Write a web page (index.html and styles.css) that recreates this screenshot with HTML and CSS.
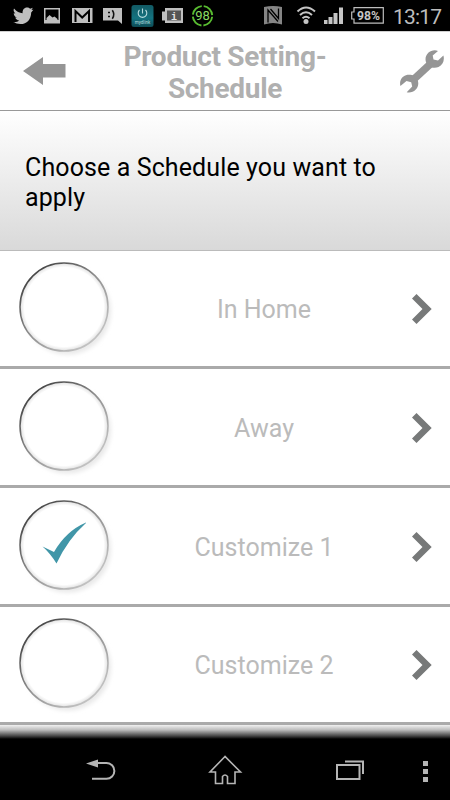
FILE: index.html
```
<!DOCTYPE html>
<html lang="en">
<head>
<meta charset="utf-8">
<title>Product Setting - Schedule</title>
<link rel="stylesheet" href="styles.css">
</head>
<body>
<svg class="defs" width="0" height="0" aria-hidden="true">
  <defs>
    <linearGradient id="rim" x1="0.15" y1="0.1" x2="0.85" y2="0.9">
      <stop offset="0" stop-color="#444"/><stop offset="0.5" stop-color="#929292"/><stop offset="1" stop-color="#c4c4c4"/>
    </linearGradient>
    <linearGradient id="teal" x1="0" y1="0" x2="0" y2="1"><stop offset="0" stop-color="#125a64"/><stop offset="0.6" stop-color="#147380"/><stop offset="1" stop-color="#0d4b55"/></linearGradient>
    <radialGradient id="inner"><stop offset="0.9" stop-color="#fff"/><stop offset="1" stop-color="#e0e0e0"/></radialGradient>
    <filter id="soft" x="-20%" y="-20%" width="140%" height="140%"><feGaussianBlur stdDeviation="2.2"/></filter>
    <symbol id="ring" viewBox="0 0 100 100">
      <circle cx="49.500" cy="50" r="43.500" fill="#e9e9e9" filter="url(#soft)"/>
      <circle cx="46" cy="46" r="44" fill="url(#inner)" stroke="url(#rim)" stroke-width="1.500"/>
    </symbol>
    <symbol id="chevron" viewBox="0 0 20 30"><path d="M0 4.500 4.500 0 19.700 15 4.500 30 0 25.500 10.500 15Z" fill="#777979"/></symbol>
  </defs>
</svg>
<div class="screen">
  <header class="status">
    <svg width="225" height="31" viewBox="0 0 225 31">
      <path d="M14 8.500c2.500 3 5.500 4.500 8.600 4.700-.3-3.300 1.600-5.700 4.400-5.700 1.300 0 2.400.5 3.100 1.300l2.700-1-1.300 2.300 1.900-.4-2.200 2.700C31 19.500 27 24 20.500 24c-2.800 0-5.200-.7-7.100-1.900 2.400.2 4.400-.4 5.800-1.600-2-.2-3.300-1.300-3.900-3h1.800c-2-.7-3.300-2.200-3.400-4.300l1.700.4c-1.800-1.600-2.200-3.400-1.400-5.100Z" fill="#bfbfbf"/>
      <path d="M44 8h16v15.500H44Zm1.500 1.500V20h13V9.500Z" fill="#bfbfbf" fill-rule="evenodd"/>
      <path d="M46.500 20.500v-2.500l3-3 3 2.500 2-1 3 2.500v1.500Z" fill="#bfbfbf"/>
      <rect x="72" y="8" width="20.500" height="15" fill="#bfbfbf"/>
      <path d="M75.500 22V11l6.700 6.500L89 11v11" fill="none" stroke="#000" stroke-width="2"/>
      <path d="M103 8h19v16l-4-3.500h-15Z" fill="#bfbfbf"/>
      <path d="M108 12.500h2M108 16.500h2M112.300 10.300q3 4.200 0 8.400" fill="none" stroke="#111" stroke-width="1.600"/>
      <rect x="131.500" y="5" width="22" height="22" rx="2.500" fill="url(#teal)"/>
      <path d="M139.500 10a4.300 4.300 0 1 0 6 0M142.500 8.500v5" fill="none" stroke="#b5dadd" stroke-width="1.100"/>
      <text x="142.500" y="23.700" class="tiny">mydlink</text>
      <path d="M165 8h18v15h-18v-2.500h-3v-9h3Z" fill="#bfbfbf"/>
      <rect x="167" y="10.500" width="14" height="10" fill="#555"/>
      <text x="174" y="19.500" class="info">i</text>
      <circle cx="202.500" cy="15.800" r="9.700" fill="none" stroke="#59bd31" stroke-width="1.900" stroke-dasharray="13.200 2.030" stroke-dashoffset="-1"/>
      <text x="202.500" y="20.300" class="level">98</text>
    </svg>
    <svg width="225" height="31" viewBox="225 0 225 31">
      <path d="M264 7q9-2 18 0v17.500q-9-3-18 0Z" fill="#858585"/>
      <path d="M268 22.500V10l10 11.500M270.500 9l8 9.500V8.500" fill="none" stroke="#000" stroke-width="1.300"/>
      <path d="M297.500 11.500q8.500-8 17.500 0M300 15q6-5.500 12 0M302.500 18.300q3.500-3 7 0" fill="none" stroke="#c5c5c5" stroke-width="2"/>
      <circle cx="306" cy="21.500" r="2.500" fill="#c5c5c5"/>
      <path d="M324 20h3.500v4H324zM328.500 17h4v7h-4zM333.500 13h4v11h-4zM339 7.500h4V24h-4z" fill="#c5c5c5"/>
      <path d="M354 7.700h29.300v15.400H354V19h-2.300v-7h2.300Z" fill="none" stroke="#bdbdbd" stroke-width="1.200"/>
      <text x="368.500" y="20.300" class="charge" textLength="23" lengthAdjust="spacingAndGlyphs">98%</text>
      <text x="393" y="23.500" class="clock" textLength="49">13:17</text>
    </svg>
  </header>

  <div class="bar">
    <svg class="back" width="43" height="28" viewBox="0 0 43 28"><path d="M0 14 20 0v7h22.500v13.500H20V28Z" fill="#959595"/></svg>
    <h1>Product Setting-<br>Schedule</h1>
    <svg class="wrench" width="44" height="43" viewBox="0 0 44 43">
      <path d="M13 30 32 12.500" stroke="#959595" stroke-width="7.500"/>
      <path d="M38 .9C31-1.500 24 4.500 25.800 11.500c1.500 6 8.500 7.500 12.700 5.500 4.300-2 6.300-6.500 4.900-11.500L38 10.500l-4.500-1-.8-4Z" fill="#959595"/>
      <path d="M.4 36 6.500 31l4.700 1.300 1 4.200-5.500 5.700c7 1.500 13-4.200 11.300-11C16.500 25.500 10.500 24 6 25.200 1.500 26.500-.8 31 .4 36Z" fill="#959595"/>
    </svg>
  </div>

  <section class="prompt"><p>Choose a Schedule you want to<br>apply</p></section>

  <main class="list">
    <div class="row"><svg class="ring" viewBox="0 0 100 100"><use href="#ring"/></svg><span>In Home</span><svg class="chevron"><use href="#chevron"/></svg></div>
    <div class="row"><svg class="ring" viewBox="0 0 100 100"><use href="#ring"/></svg><span>Away</span><svg class="chevron"><use href="#chevron"/></svg></div>
    <div class="row"><svg class="ring" viewBox="0 0 100 100"><use href="#ring"/><path d="M24.500 47.500 36 53Q48 32 68 23.500V24Q50 40 38.500 64.500Q32 54 24.500 47.500Z" fill="#4196a8"/></svg><span>Customize 1</span><svg class="chevron"><use href="#chevron"/></svg></div>
    <div class="row"><svg class="ring" viewBox="0 0 100 100"><use href="#ring"/></svg><span>Customize 2</span><svg class="chevron"><use href="#chevron"/></svg></div>
  </main>

  <footer class="nav">
    <svg width="450" height="75" viewBox="0 725 450 75" fill="none" stroke="#b5b5b5" stroke-width="2">
      <path d="M97 763h9.500a7.900 7.900 0 0 1 0 15.800H92"/><path d="M86 763.500 98 759.500v8Z" fill="#b5b5b5" stroke="none"/>
      <path d="M225 756.500 210 772h5.500v11.500h7v-7q2.500-3 5 0v7h7.500V772h5.500Z" stroke-width="1.600"/>
      <rect x="337" y="765" width="22.500" height="14"/><path d="M345 761.500h18V774"/>
      <path d="M423 761h5v5h-5zM423 769h5v5h-5zM423 777h5v5h-5z" fill="#b5b5b5" stroke="none"/>
    </svg>
  </footer>
</div>
</body>
</html>
```
FILE: styles.css
```
* { box-sizing: border-box; }
body { margin: 0; background: #000; font-family: Roboto, "Liberation Sans", sans-serif; }
svg { display: block; flex: none; }
.defs { position: absolute; }
.screen { width: 450px; height: 800px; display: flex; flex-direction: column; overflow: hidden; background: #fff; }

.status { display: flex; height: 31px; background: #000; flex: none; }
.tiny { font-size: 4.5px; fill: #b5dadd; text-anchor: middle; }
.info { font: bold 10px "Liberation Mono", monospace; fill: #e5e5e5; text-anchor: middle; }
.level { font-size: 13px; fill: #8bdc63; text-anchor: middle; }
.charge { font-size: 12.5px; font-weight: 700; fill: #c5c5c5; text-anchor: middle; }
.clock { font-size: 21px; fill: #bdbdbd; }

.bar { display: flex; align-items: center; height: 80px; flex: none; padding: 0 6px 0 23px; border-top: 1px solid #d0d0d0; border-bottom: 1px solid #999; }
.bar h1 { flex: 1; margin: 4px 16px 0 0; font-size: 28px; line-height: 32px; font-weight: 700; letter-spacing: -0.3px; color: #b0b0b0; text-align: center; }

.prompt { height: 140px; flex: none; padding: 42px 25px 0; background: linear-gradient(#fff, #d9d9d9); border-bottom: 1px solid #bbb; }
.prompt p { margin: 0; font-size: 25px; line-height: 30px; letter-spacing: 0.11px; color: #000; white-space: nowrap; }

.list { flex: none; }
.row { display: flex; align-items: center; height: 118.800px; padding: 0 18px; border-bottom: 3px solid #aaa; }
.row:first-child { height: 118px; padding-bottom: 1px; }
.ring { width: 100px; height: 100px; margin-top: 6px; }
.row span { flex: 1; padding: 3px 2px 0 0; text-align: center; font-size: 25px; color: #bbb; }
.chevron { width: 20px; height: 30px; margin-top: 2px; }

.nav { flex: 1; background: linear-gradient(#f0f0f0 0, #bbb 5px, #444 11px, #000 14px); }
```
